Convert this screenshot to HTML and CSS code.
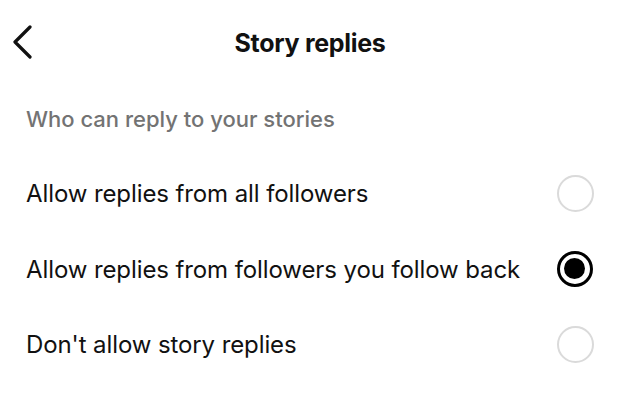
FILE: index.html
```html
<!DOCTYPE html>
<html>
<head>
<meta charset="utf-8">
<link rel="stylesheet" href="styles.css">
</head>
<body>
<div class="screen">
  <header class="topbar">
    <span class="back">
      <svg width="21" height="34" viewBox="0 0 21 34"><path d="M18 2 L3 17 L18 32" fill="none" stroke="#111" stroke-width="3.2" stroke-linecap="round" stroke-linejoin="round"/></svg>
    </span>
    <h1 class="title">Story replies</h1>
  </header>
  <div class="section">Who can reply to your stories</div>
  <ul class="options">
    <li class="option"><span class="label">Allow replies from all followers</span><span class="radio"></span></li>
    <li class="option"><span class="label">Allow replies from followers you follow back</span><span class="radio selected"></span></li>
    <li class="option"><span class="label">Don't allow story replies</span><span class="radio"></span></li>
  </ul>
</div>
</body>
</html>
```
FILE: styles.css
```css
* { box-sizing: border-box; }
html, body { margin: 0; padding: 0; background: #fff; }
body { font-family: Inter, "Liberation Sans", sans-serif; color: #111; }
.screen { width: 620px; height: 400px; overflow: hidden; }
.topbar { position: relative; height: 86px; display: flex; align-items: center; justify-content: center; }
.back { position: absolute; left: 12px; top: 25px; display: flex; }
.title { margin: 0; font-size: 25px; font-weight: 700; letter-spacing: -0.3px; }
.section { padding: 0 26px; font-size: 22px; color: #737373; line-height: 26px; margin-top: 20px; font-weight: 500; }
.options { list-style: none; margin: 0; padding: 0; margin-top: 24px; }
.option { display: flex; align-items: center; justify-content: space-between; padding: 0 26px 0 26px; height: 75.5px; }
.label { font-size: 24px; letter-spacing: -0.1px; }
.radio { width: 37px; height: 37px; border-radius: 50%; border: 2.5px solid #dadada; margin-right: 0; position: relative; flex: none; }
.radio.selected { width: 36px; height: 36px; border: 3.5px solid #000; margin-right: 1px; }
.radio.selected::after { content: ""; position: absolute; left: 4px; top: 4px; width: 21px; height: 21px; border-radius: 50%; background: #000; }
```
